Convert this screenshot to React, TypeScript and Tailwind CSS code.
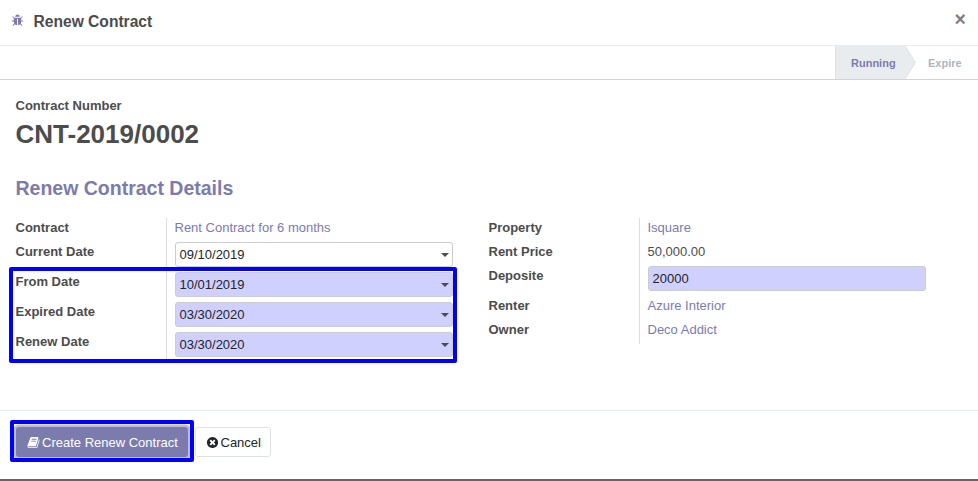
import type { ReactNode } from "react";

const BUG =
  "M1696 960q0 26-19 45t-45 19h-224q0 171-67 290l208 209q19 19 19 45t-19 45q-18 19-45 19t-45-19l-198-197q-5 5-15 13t-42 28.5-65 36.5-82 29-97 13v-896h-128v896q-51 0-101.5-13.5t-87-33-66-39-43.5-32.5l-15-14-183 207q-20 21-48 21-24 0-43-16-19-18-20.5-44.5t15.5-46.5l202-227q-58-114-58-274h-224q-26 0-45-19t-19-45 19-45 45-19h224v-294l-173-173q-19-19-19-45t19-45 45-19 45 19l173 173h844l173-173q19-19 45-19t45 19 19 45-19 45l-173 173v294h224q26 0 45 19t19 45zm-480-576h-640q0-133 93.5-226.5t226.5-93.5 226.5 93.5 93.5 226.5z";
const BOOK =
  "M1703 478q40 57 18 129l-275 906q-19 64-76.5 107.5t-122.5 43.5h-923q-77 0-148.5-53.5t-99.5-131.5q-24-67-2-127 0-4 3-27t4-37q1-8-3-21.5t-3-19.5q2-11 8-21t16.5-23.5 16.5-23.5q23-38 45-91.5t30-91.5q3-10 .5-30t-.5-28q3-11 17-28t17-23q21-36 42-92t25-90q1-9-2.5-32t.5-28q4-13 22-30.5t22-22.5q19-26 42.5-84.5t27.5-96.5q1-8-3-25.5t-2-26.5q2-8 9-18t18-23 17-21q8-12 16.5-30.5t15-35 16-36 19.5-32 26.5-23.5 36-11.5 47.5 5.5l-1 3q38-9 51-9h761q74 0 114 56t18 130l-274 906q-36 119-71.5 153.5t-128.5 34.5h-869q-27 0-38 15-11 16-1 43 24 70 144 70h923q29 0 56-15.5t35-41.5l300-987q7-22 5-57 38 15 59 43zm-1064 2q-4 13 2 22.5t20 9.5h608q13 0 25.5-9.5t16.5-22.5l21-64q4-13-2-22.5t-20-9.5h-608q-13 0-25.5 9.5t-16.5 22.5zm-83 256q-4 13 2 22.5t20 9.5h608q13 0 25.5-9.5t16.5-22.5l21-64q4-13-2-22.5t-20-9.5h-608q-13 0-25.5 9.5t-16.5 22.5z";
const TIMES_CIRCLE =
  "M1277 1122q0-26-19-45l-181-181 181-181q19-19 19-45 0-27-19-46l-90-90q-19-19-46-19-26 0-45 19l-181 181-181-181q-19-19-45-19-27 0-46 19l-90 90q-19 19-19 46 0 26 19 45l181 181-181 181q-19 19-19 45 0 27 19 46l90 90q19 19 46 19 26 0 45-19l181-181 181 181q19 19 45 19 27 0 46-19l90-90q19-19 19-46zm387-226q0 209-103 385.5t-279.5 279.5-385.5 103-385.5-103-279.5-279.5-103-385.5 103-385.5 279.5-279.5 385.5-103 385.5 103 279.5 279.5 103 385.5z";

function Icon({ d, className }: { d: string; className: string }) {
  return (
    <svg viewBox="0 0 1792 1792" fill="currentColor" className={className} aria-hidden="true">
      <path d={d} />
    </svg>
  );
}

function Row({ label, tall, children }: { label: string; tall?: boolean; children: ReactNode }) {
  return (
    <div className={tall ? "flex h-[30px]" : "flex h-6"}>
      <div className="w-[151px] shrink-0 pl-[0.5px] leading-5 font-bold">{label}</div>
      <div className="w-[287px] border-l border-[#dddddd] pl-[7.5px] leading-5">{children}</div>
    </div>
  );
}

function Field({ value, date, required }: { value: string; date?: boolean; required?: boolean }) {
  return (
    <div
      className={`flex h-[25px] w-[278.5px] items-center justify-between rounded-[3px] border border-[#cccccc] pr-[3px] pl-1 text-[#212529] ${
        required ? "bg-[#d0d0ff]" : "bg-white"
      }`}
    >
      <span>{value}</span>
      {date && (
        <svg width="8" height="4" viewBox="0 0 8 4" className="mt-px text-[#4c4c4c]" aria-hidden="true">
          <path d="M0 0h8L4 4z" fill="currentColor" />
        </svg>
      )}
    </div>
  );
}

const Ref = ({ children }: { children: ReactNode }) => <span className="text-[#7c7bad]">{children}</span>;

export default function App() {
  return (
    <div className="relative flex h-[481px] w-[978px] flex-col overflow-hidden bg-white font-['Liberation_Sans',Arial,sans-serif] text-[13px] text-[#4c4c4c]">
      <header className="flex h-[46px] shrink-0 items-center border-b border-[#e9ecef] pr-3 pl-[11px]">
        <Icon d={BUG} className="mt-[-4px] size-[13px] text-[#7c7bad]" />
        <h4 className="mt-[-2px] ml-[9.5px] flex-1 text-[15.6px] leading-6 font-bold">Renew Contract</h4>
        <button className="mt-[-6px] text-[19.5px] leading-none font-bold text-[#7f7f7f]">×</button>
      </header>

      <div className="flex h-[34px] shrink-0 justify-end border-b border-[#ced4da] text-[11px] font-bold">
        <div className="flex w-[70px] items-center border-l border-[#dee2e6] bg-[#e9ecef] pt-px pl-[15px] text-[#7c7bad]">
          Running
        </div>
        <svg width="11" height="33" viewBox="0 0 11 33" aria-hidden="true">
          <path d="M0 0L10.5 16.5L0 33z" fill="#e9ecef" />
          <path d="M0 0L10.5 16.5L0 33" fill="none" stroke="#dee2e6" />
        </svg>
        <div className="flex w-[62px] items-center pt-px pl-3 text-[#adb5bd]">Expire</div>
      </div>

      <main className="h-[330px] shrink-0 pt-4 pl-[15px]">
        <div className="pl-[0.5px]">
          <div className="leading-5 font-bold">Contract Number</div>
          <h1 className="text-[26px] leading-9 font-bold">CNT-2019/0002</h1>
          <h2 className="mt-[21px] text-[19.5px] leading-[30px] font-bold text-[#7c7bad]">Renew Contract Details</h2>
        </div>
        <div className="mt-[15px] flex gap-[35px]">
          <div>
            <Row label="Contract">
              <Ref>Rent Contract for 6 months</Ref>
            </Row>
            <Row label="Current Date" tall>
              <Field value="09/10/2019" date />
            </Row>
            <Row label="From Date" tall>
              <Field value="10/01/2019" date required />
            </Row>
            <Row label="Expired Date" tall>
              <Field value="03/30/2020" date required />
            </Row>
            <Row label="Renew Date" tall>
              <Field value="03/30/2020" date required />
            </Row>
          </div>
          <div>
            <Row label="Property">
              <Ref>Isquare</Ref>
            </Row>
            <Row label="Rent Price">50,000.00</Row>
            <Row label="Deposite" tall>
              <Field value="20000" required />
            </Row>
            <Row label="Renter">
              <Ref>Azure Interior</Ref>
            </Row>
            <Row label="Owner">
              <Ref>Deco Addict</Ref>
            </Row>
          </div>
        </div>
      </main>

      <footer className="flex h-[69px] shrink-0 items-start gap-[7px] border-t border-[#e9ecef] pt-4 pl-4">
        <button className="flex h-[30px] w-[172px] items-center rounded-[3px] bg-[#7c7bad] pl-[11px] text-white ring-[2.5px] ring-[#7c7bad]/50">
          <Icon d={BOOK} className="mr-[2px] size-[13px]" />
          <span className="pt-[2px]">Create Renew Contract</span>
        </button>
        <button className="flex h-[30px] w-[76px] items-center rounded-[3px] border border-[#dee2e6] bg-white pl-[9.5px] text-[#212529]">
          <Icon d={TIMES_CIRCLE} className="mr-[2px] size-[13px]" />
          <span className="pt-[2px]">Cancel</span>
        </button>
      </footer>
      <div className="h-[2px] shrink-0 bg-[#666666]" />

      <div className="absolute top-[267px] left-[9px] h-24 w-[448px] rounded-[2px] border-4 border-[#0000ff]" />
      <div className="absolute top-[420px] left-[10px] h-[42px] w-[184px] rounded-[2px] border-4 border-[#0000ff]" />
    </div>
  );
}
